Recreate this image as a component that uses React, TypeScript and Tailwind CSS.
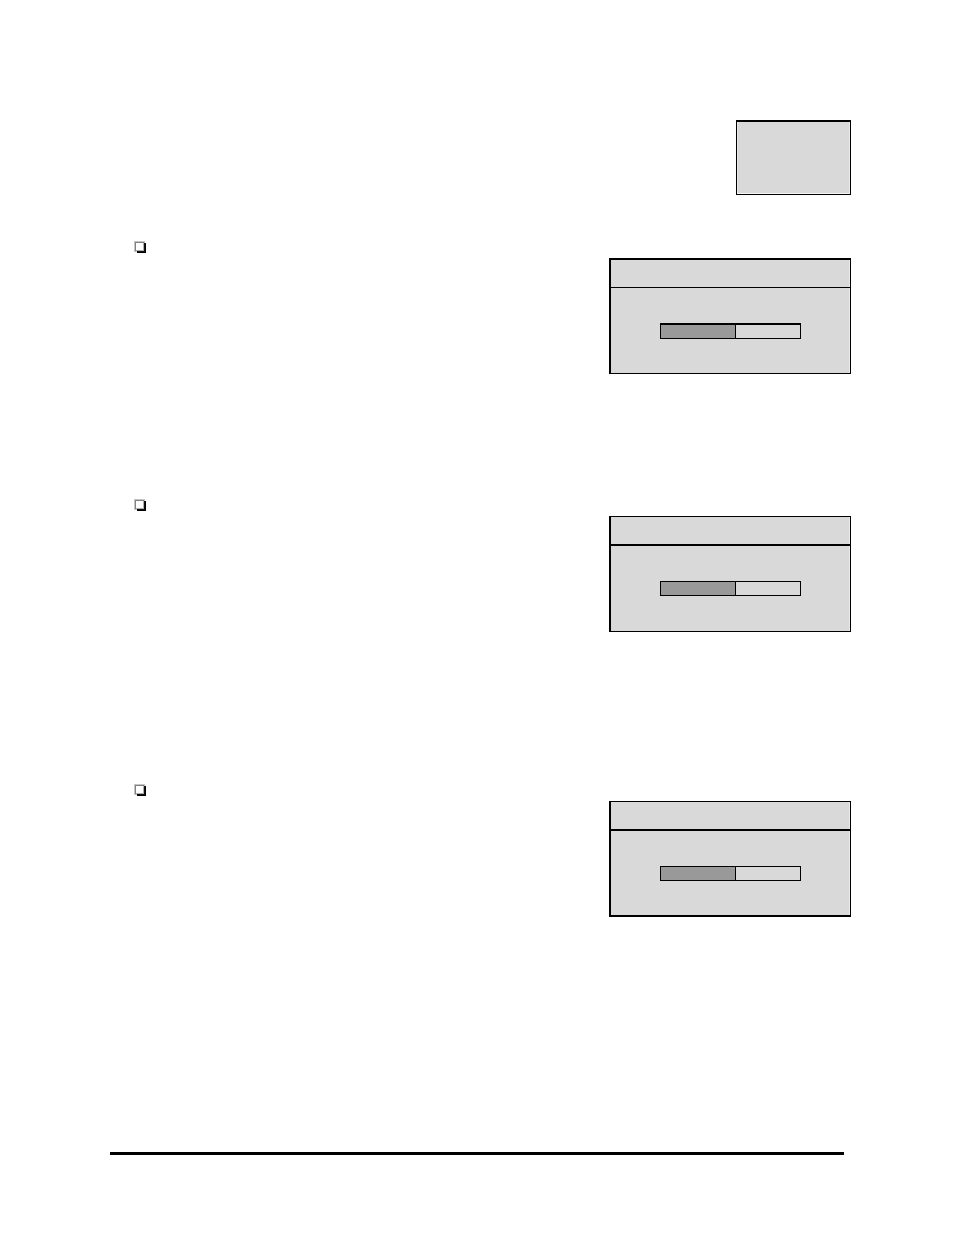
type PanelProps = {
  frame: string;
  header: string;
  bar: string;
  value: number;
};

function Bullet() {
  return (
    <svg width="12" height="12" viewBox="0 0 12 12" shapeRendering="crispEdges" aria-hidden="true">
      <rect x="3" y="2" width="9" height="10" fill="#000" />
      <rect x="0" y="0" width="11" height="11" fill="#c4c4c4" />
      <rect x="1" y="1" width="9" height="9" fill="#808080" />
      <rect x="10" y="2" width="1" height="9" fill="#111" />
      <rect x="3" y="10" width="7" height="1" fill="#111" />
      <rect x="2" y="2" width="7" height="7" fill="#fff" />
      <rect x="9" y="2" width="1" height="7" fill="#b0b0b0" />
      <rect x="2" y="9" width="8" height="1" fill="#b0b0b0" />
    </svg>
  );
}

function LevelPanel({ frame, header, bar, value }: PanelProps) {
  return (
    <div
      className={`mt-[17px] flex h-[116px] w-[242px] flex-col border-r border-l-2 border-black bg-[#d9d9d9] shadow-[inset_-1px_0_0_#e8e8e8] ${frame}`}
    >
      <div className={`border-black ${header}`} />
      <div
        role="progressbar"
        aria-label="Level"
        aria-valuenow={value}
        aria-valuemin={0}
        aria-valuemax={100}
        className={`mx-auto mt-[35px] w-[141px] border border-black ${bar}`}
      >
        <div className="h-full border-r border-black bg-[#999]" style={{ width: `${value}%` }} />
      </div>
    </div>
  );
}

const panels = [
  { section: "h-[258px]", frame: "border-t-2 border-b", header: "h-7 border-b", bar: "h-4 border-t-2", value: 54 },
  { section: "h-[285px]", frame: "border-t border-b", header: "h-[29px] border-b-2", bar: "h-[15px]", value: 54 },
  { section: "h-[368px]", frame: "border-t border-b-2", header: "h-[29px] border-b-2", bar: "h-[15px]", value: 54 },
];

export default function App() {
  return (
    <main className="min-h-screen bg-white pt-[120px] pb-20">
      <header className="flex h-[121px] items-start justify-end pr-[103px]">
        <div className="h-[75px] w-[115px] border border-t-2 border-black bg-[#d9d9d9] shadow-[inset_0_-1px_0_#f7f7f7,inset_-1px_0_0_#e8e8e8,inset_1px_0_0_#e8e8e8]" />
      </header>
      {panels.map(({ section, ...panel }, index) => (
        <section key={index} className={`flex items-start justify-between pr-[103px] pl-[134px] ${section}`}>
          <Bullet />
          <LevelPanel {...panel} />
        </section>
      ))}
      <hr className="mr-[110px] ml-[110px] border-t-3 border-black" />
    </main>
  );
}
